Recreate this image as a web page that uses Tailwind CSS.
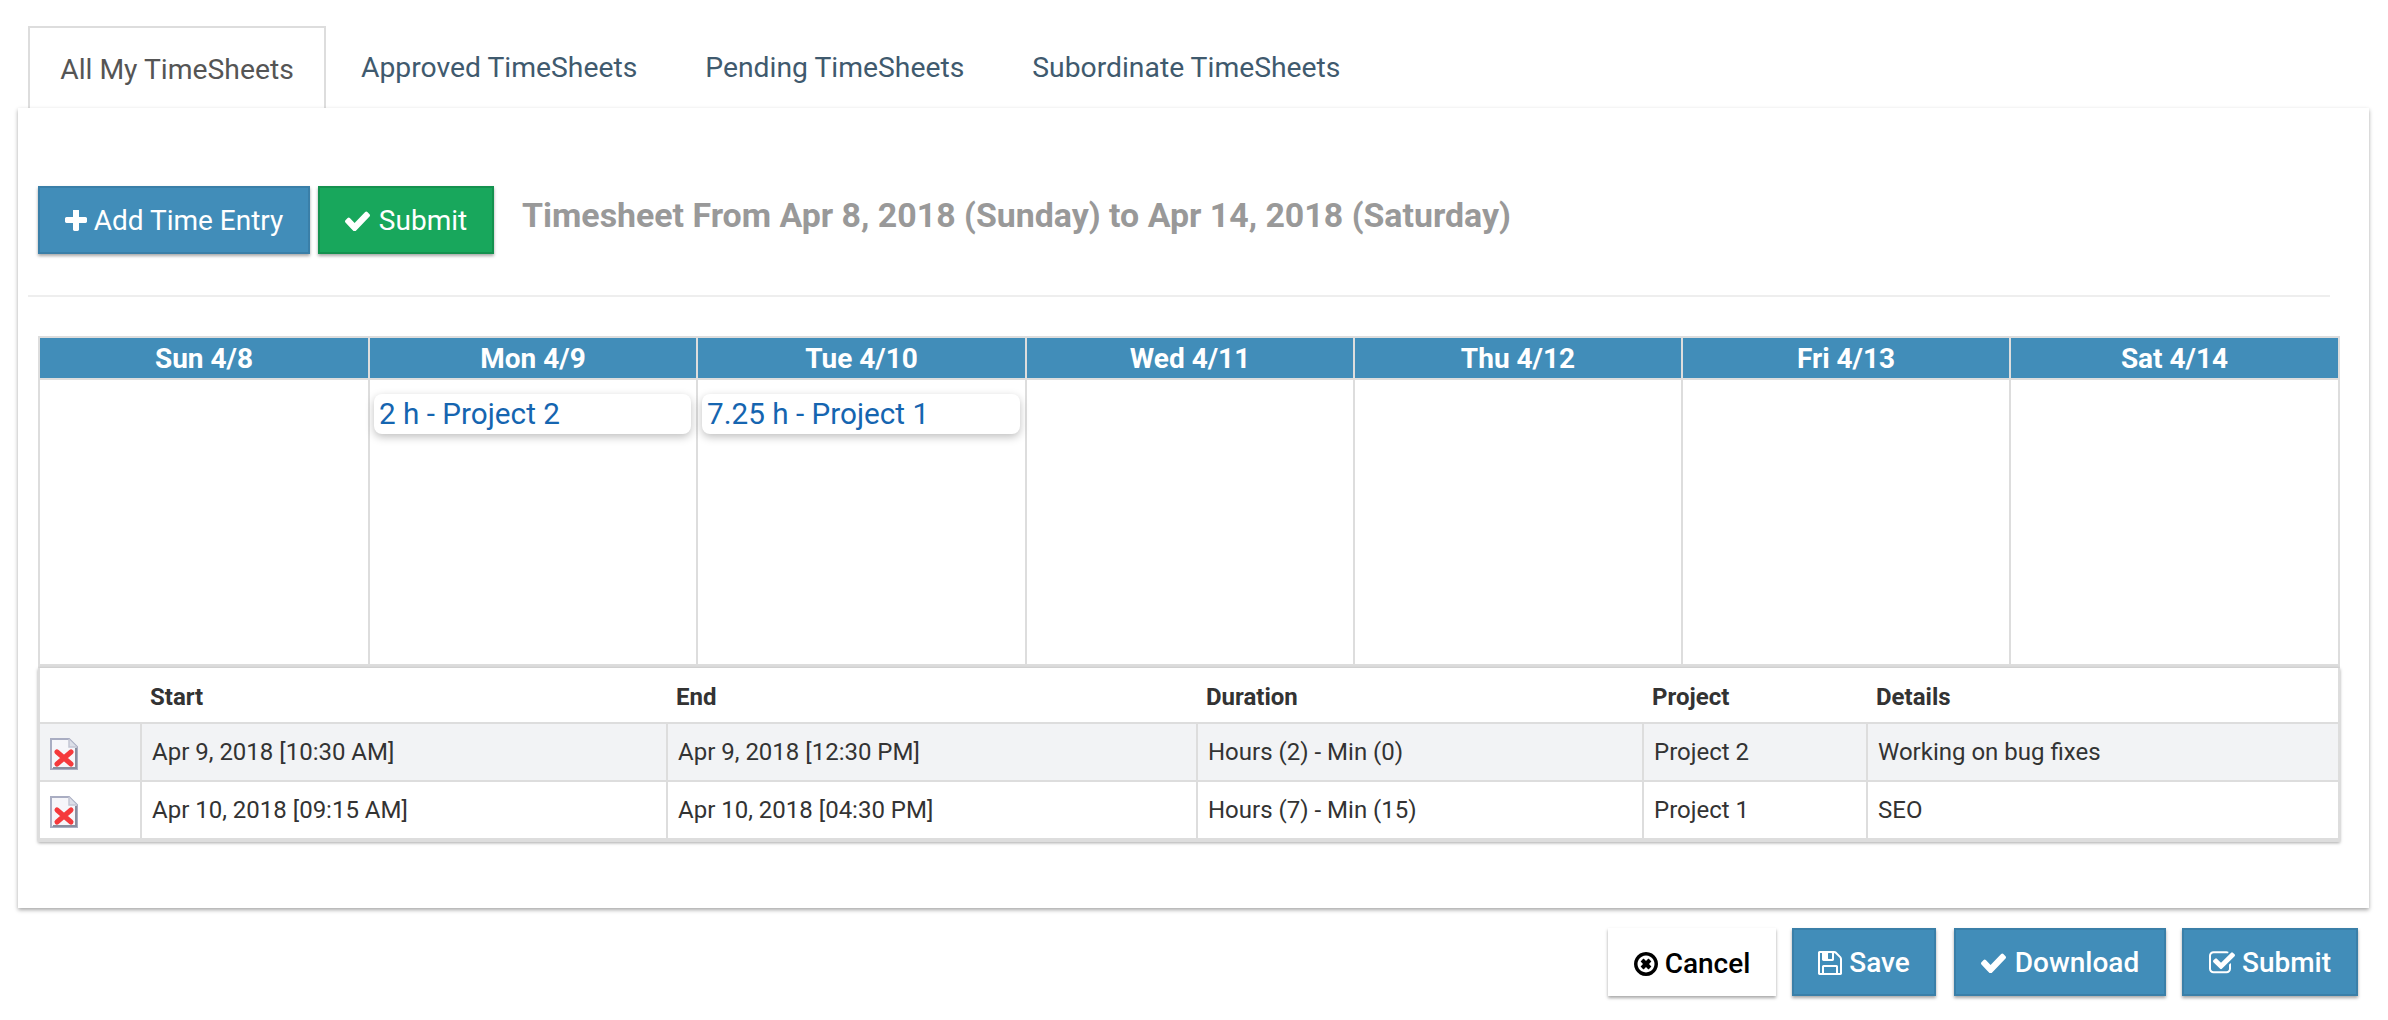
<!DOCTYPE html>
<html>
<head>
<meta charset="utf-8">
<script src="https://cdn.jsdelivr.net/npm/@tailwindcss/browser@4"></script>
</head>
<body class="bg-white font-['Roboto',sans-serif] w-[2388px] h-[1020px] overflow-hidden">
<div class="pt-[26px]">
  <div class="flex ml-[28px] h-[82px] text-[28.3px] text-[#3f5a6e]">
    <div class="w-[298px] h-[84px] relative z-0 border-2 border-b-0 border-[#dddddd] flex items-center justify-center text-[#555555] pt-[2px]">All My TimeSheets</div>
    <div class="ml-[35px] flex items-center pt-[2px]">Approved TimeSheets</div>
    <div class="ml-[68px] flex items-center pt-[2px]">Pending TimeSheets</div>
    <div class="ml-[68px] flex items-center pt-[2px]">Subordinate TimeSheets</div>
  </div>
  <div class="relative ml-[18px] w-[2351px] h-[800px] bg-white shadow-[0_2px_4px_rgba(0,0,0,0.35)] pt-[78px]">
    <div class="flex items-start ml-[20px] h-[68px]">
      <div class="w-[272px] h-[68px] bg-[#418db9] border-2 border-[#3a7fa8] shadow-[0_2px_3px_rgba(0,0,0,0.35)] text-white text-[28px] flex items-center justify-center gap-[7px] pt-[1px]">
        <svg class="w-[22px] h-[22px]" viewBox="192 192 1408 1408" fill="currentColor"><path d="M1600 736v192q0 40-28 68t-68 28h-416v416q0 40-28 68t-68 28h-192q-40 0-68-28t-28-68v-416h-416q-40 0-68-28t-28-68v-192q0-40 28-68t68-28h416v-416q0-40 28-68t68-28h192q40 0 68 28t28 68v416h416q40 0 68 28t28 68z"/></svg>
        <span>Add Time Entry</span>
      </div>
      <div class="ml-[8px] w-[176px] h-[68px] bg-[#18a75c] border-2 border-[#14914f] shadow-[0_2px_3px_rgba(0,0,0,0.35)] text-white text-[28px] flex items-center justify-center gap-[9px] pt-[1px]">
        <svg class="w-[25px] h-[20px]" viewBox="121 300 1550 1200" fill="currentColor" preserveAspectRatio="none"><path d="M1671 566q0 40-28 68l-724 724-136 136q-28 28-68 28t-68-28l-136-136-362-362q-28-28-28-68t28-68l136-136q28-28 68-28t68 28l294 295 656-657q28-28 68-28t68 28l136 136q28 28 28 68z"/></svg>
        <span>Submit</span>
      </div>
      <div class="ml-[28px] h-[60px] flex items-center text-[33.9px] font-bold text-[#999999]">Timesheet From Apr 8, 2018 (Sunday) to Apr 14, 2018 (Saturday)</div>
    </div>
    <div class="ml-[10px] w-[2302px] h-[2px] bg-[#eeeeee] mt-[41px]"></div>
    <div class="ml-[20px] w-[2302px] mt-[39px]">
      <div class="grid grid-cols-[330px_328px_329px_328px_328px_328px_327px] border-2 border-b-4 border-[#dddddd]">
        <div class="h-[42px] pt-[2px] bg-[#418db9] text-white font-bold text-[28px] flex items-center justify-center border-b-2 border-[#dddddd] border-r-2">Sun 4/8</div>
        <div class="h-[42px] pt-[2px] bg-[#418db9] text-white font-bold text-[28px] flex items-center justify-center border-b-2 border-[#dddddd] border-r-2">Mon 4/9</div>
        <div class="h-[42px] pt-[2px] bg-[#418db9] text-white font-bold text-[28px] flex items-center justify-center border-b-2 border-[#dddddd] border-r-2">Tue 4/10</div>
        <div class="h-[42px] pt-[2px] bg-[#418db9] text-white font-bold text-[28px] flex items-center justify-center border-b-2 border-[#dddddd] border-r-2">Wed 4/11</div>
        <div class="h-[42px] pt-[2px] bg-[#418db9] text-white font-bold text-[28px] flex items-center justify-center border-b-2 border-[#dddddd] border-r-2">Thu 4/12</div>
        <div class="h-[42px] pt-[2px] bg-[#418db9] text-white font-bold text-[28px] flex items-center justify-center border-b-2 border-[#dddddd] border-r-2">Fri 4/13</div>
        <div class="h-[42px] pt-[2px] bg-[#418db9] text-white font-bold text-[28px] flex items-center justify-center border-b-2 border-[#dddddd]">Sat 4/14</div>

        <div class="h-[284px] border-r-2 border-[#dddddd]"></div>
        <div class="h-[284px] border-r-2 border-[#dddddd] pt-[14px] pl-[4px] pr-[5px]">
          <div class="h-[40px] rounded-[8px] bg-white shadow-[0_3px_8px_rgba(0,0,0,0.25)] pl-[5px] flex items-center text-[29.7px] text-[#1565b0]">2 h - Project 2</div>
        </div>
        <div class="h-[284px] border-r-2 border-[#dddddd] pt-[14px] pl-[4px] pr-[5px]">
          <div class="h-[40px] rounded-[8px] bg-white shadow-[0_3px_8px_rgba(0,0,0,0.25)] pl-[5px] flex items-center text-[29.7px] text-[#1565b0]">7.25 h - Project 1</div>
        </div>
        <div class="h-[284px] border-r-2 border-[#dddddd]"></div>
        <div class="h-[284px] border-r-2 border-[#dddddd]"></div>
        <div class="h-[284px] border-r-2 border-[#dddddd]"></div>
        <div class="h-[284px]"></div>
      </div>
      <div class="grid grid-cols-[102px_526px_530px_446px_224px_1fr] shadow-[0_1px_3px_rgba(0,0,0,0.35)] text-[24px] text-[#333333] border-l-2 border-r-2 border-b-4 border-[#dddddd] w-[2302px]">
        <div class="h-[56px] border-b-2 border-[#dddddd]"></div>
        <div class="h-[56px] pt-[3px] border-b-2 border-[#dddddd] flex items-center pl-[8px] font-bold">Start</div>
        <div class="h-[56px] pt-[3px] border-b-2 border-[#dddddd] flex items-center pl-[8px] font-bold">End</div>
        <div class="h-[56px] pt-[3px] border-b-2 border-[#dddddd] flex items-center pl-[8px] font-bold">Duration</div>
        <div class="h-[56px] pt-[3px] border-b-2 border-[#dddddd] flex items-center pl-[8px] font-bold">Project</div>
        <div class="h-[56px] pt-[3px] border-b-2 border-[#dddddd] flex items-center pl-[8px] font-bold">Details</div>

        <div class="h-[58px] bg-[#f2f3f5] border-b-2 border-r-2 border-[#dddddd] pl-[10px] pt-[14px]">
          <svg class="w-[28px] h-[32px] blur-[0.5px]" viewBox="0 0 28 32"><path d="M1 1H19L27 9V31H1Z" fill="#f6f6fa" stroke="#a9adc2" stroke-width="2"/><path d="M19 1V9H27" fill="#dcdfe8" stroke="#c3c6d4" stroke-width="1.5"/><path d="M26 10V30H3" fill="none" stroke="#8a8e9e" stroke-width="2"/><path d="M7 14L21 26M21 14L7 26" stroke="#f5393c" stroke-width="5" stroke-linecap="round"/></svg>
        </div>
        <div class="h-[58px] bg-[#f2f3f5] border-b-2 border-r-2 border-[#dddddd] flex items-center pl-[10px]">Apr 9, 2018 [10:30 AM]</div>
        <div class="h-[58px] bg-[#f2f3f5] border-b-2 border-r-2 border-[#dddddd] flex items-center pl-[10px]">Apr 9, 2018 [12:30 PM]</div>
        <div class="h-[58px] bg-[#f2f3f5] border-b-2 border-r-2 border-[#dddddd] flex items-center pl-[10px]">Hours (2) - Min (0)</div>
        <div class="h-[58px] bg-[#f2f3f5] border-b-2 border-r-2 border-[#dddddd] flex items-center pl-[10px]">Project 2</div>
        <div class="h-[58px] bg-[#f2f3f5] border-b-2 border-[#dddddd] flex items-center pl-[10px]">Working on bug fixes</div>

        <div class="h-[56px] border-r-2 border-[#dddddd] pl-[10px] pt-[14px]">
          <svg class="w-[28px] h-[32px] blur-[0.5px]" viewBox="0 0 28 32"><path d="M1 1H19L27 9V31H1Z" fill="#f6f6fa" stroke="#a9adc2" stroke-width="2"/><path d="M19 1V9H27" fill="#dcdfe8" stroke="#c3c6d4" stroke-width="1.5"/><path d="M26 10V30H3" fill="none" stroke="#8a8e9e" stroke-width="2"/><path d="M7 14L21 26M21 14L7 26" stroke="#f5393c" stroke-width="5" stroke-linecap="round"/></svg>
        </div>
        <div class="h-[56px] border-r-2 border-[#dddddd] flex items-center pl-[10px]">Apr 10, 2018 [09:15 AM]</div>
        <div class="h-[56px] border-r-2 border-[#dddddd] flex items-center pl-[10px]">Apr 10, 2018 [04:30 PM]</div>
        <div class="h-[56px] border-r-2 border-[#dddddd] flex items-center pl-[10px]">Hours (7) - Min (15)</div>
        <div class="h-[56px] border-r-2 border-[#dddddd] flex items-center pl-[10px]">Project 1</div>
        <div class="h-[56px] flex items-center pl-[10px]">SEO</div>
      </div>
    </div>
  </div>
  <div class="flex ml-[1608px] mt-[20px] text-[28px] font-medium">
    <div class="w-[168px] h-[68px] pt-[3px] bg-white text-black shadow-[0_2px_3px_rgba(0,0,0,0.35)] flex items-center justify-center gap-[7px]">
      <svg class="w-[24px] h-[24px]" viewBox="128 128 1536 1536" fill="currentColor"><path d="M1225 1079l-146 146q-10 10-23 10t-23-10l-137-137-137 137q-10 10-23 10t-23-10l-146-146q-10-10-10-23t10-23l137-137-137-137q-10-10-10-23t10-23l146-146q10-10 23-10t23 10l137 137 137-137q10-10 23-10t23 10l146 146q10 10 10 23t-10 23l-137 137 137 137q10 10 10 23t-10 23zm215-183q0-148-73-273t-198-198-273-73-273 73-198 198-73 273 73 273 198 198 273 73 273-73 198-198 73-273zm224 0q0 209-103 385.5t-279.5 279.5-385.5 103-385.5-103-279.5-279.5-103-385.5 103-385.5 279.5-279.5 385.5-103 385.5 103 279.5 279.5 103 385.5z"/></svg>
      <span>Cancel</span>
    </div>
    <div class="ml-[16px] w-[144px] h-[68px] pt-[1px] bg-[#418db9] border-2 border-[#3a7fa8] text-white shadow-[0_2px_3px_rgba(0,0,0,0.35)] flex items-center justify-center gap-[7px]">
      <svg class="w-[24px] h-[24px]" viewBox="128 128 1536 1536" fill="currentColor"><path d="M512 1536h768v-384h-768v384zm896 0h128v-896q0-14-10-38.5t-20-34.5l-281-281q-10-10-34-20t-39-10v416q0 40-28 68t-68 28h-576q-40 0-68-28t-28-68v-416h-128v1280h128v-416q0-40 28-68t68-28h832q40 0 68 28t28 68v416zm-384-928v-320q0-13-9.5-22.5t-22.5-9.5h-192q-13 0-22.5 9.5t-9.5 22.5v320q0 13 9.5 22.5t22.5 9.5h192q13 0 22.5-9.5t9.5-22.5zm640 32v928q0 40-28 68t-68 28h-1344q-40 0-68-28t-28-68v-1344q0-40 28-68t68-28h928q40 0 88 20t76 48l280 280q28 28 48 76t20 88z"/></svg>
      <span>Save</span>
    </div>
    <div class="ml-[18px] w-[212px] h-[68px] pt-[1px] bg-[#418db9] border-2 border-[#3a7fa8] text-white shadow-[0_2px_3px_rgba(0,0,0,0.35)] flex items-center justify-center gap-[9px]">
      <svg class="w-[25px] h-[20px]" viewBox="121 300 1550 1200" fill="currentColor" preserveAspectRatio="none"><path d="M1671 566q0 40-28 68l-724 724-136 136q-28 28-68 28t-68-28l-136-136-362-362q-28-28-28-68t28-68l136-136q28-28 68-28t68 28l294 295 656-657q28-28 68-28t68 28l136 136q28 28 28 68z"/></svg>
      <span>Download</span>
    </div>
    <div class="ml-[16px] w-[176px] h-[68px] pt-[1px] bg-[#418db9] border-2 border-[#3a7fa8] text-white shadow-[0_2px_3px_rgba(0,0,0,0.35)] flex items-center justify-center gap-[7px]">
      <svg class="w-[26px] h-[24px]" viewBox="64 160 1664 1440" fill="currentColor"><path d="M1472 930v318q0 119-84.5 203.5t-203.5 84.5h-832q-119 0-203.5-84.5t-84.5-203.5v-832q0-119 84.5-203.5t203.5-84.5h832q63 0 117 25 15 7 18 23 3 17-9 29l-49 49q-10 10-23 10-3 0-9-2-23-6-45-6h-832q-66 0-113 47t-47 113v832q0 66 47 113t113 47h832q66 0 113-47t47-113v-254q0-13 9-22l64-64q10-10 23-10 6 0 12 3 20 8 20 29zm231-489l-814 814q-24 24-57 24t-57-24l-430-430q-24-24-24-57t24-57l110-110q24-24 57-24t57 24l263 263 647-647q24-24 57-24t57 24l110 110q24 24 24 57t-24 57z"/></svg>
      <span>Submit</span>
    </div>
  </div>
</div>
</body>
</html>
